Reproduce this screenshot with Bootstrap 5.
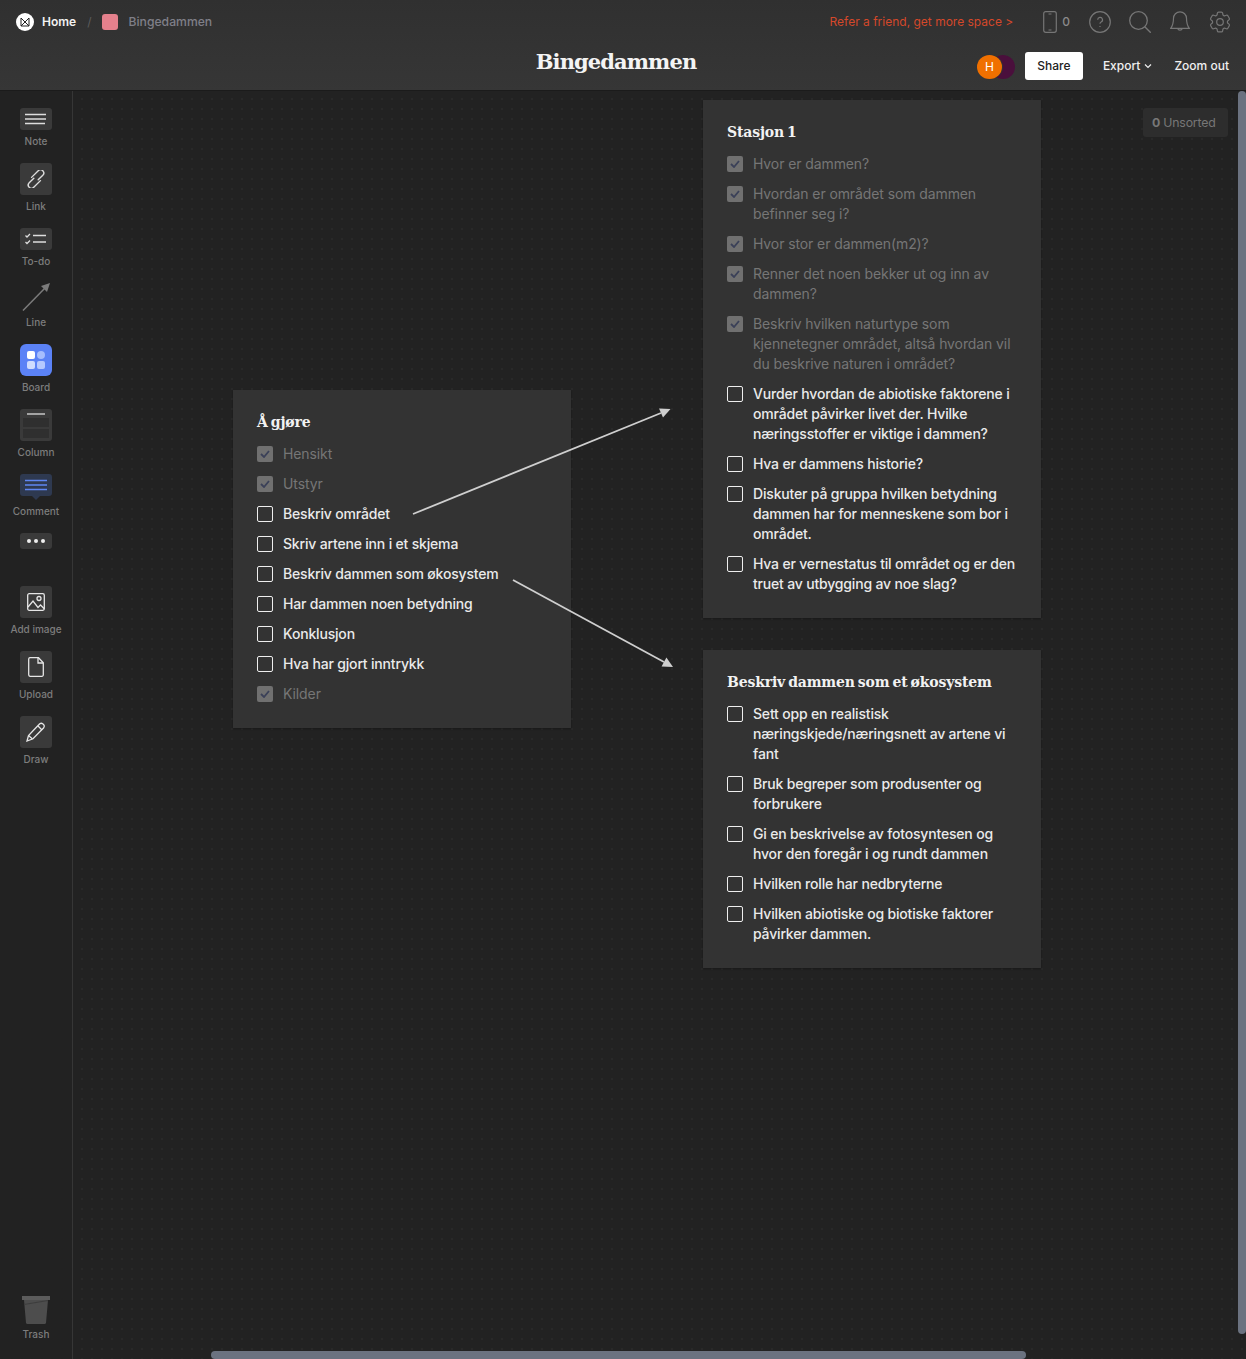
<!doctype html>
<html lang="no">
<head>
<meta charset="utf-8">
<title>Bingedammen</title>
<link href="https://cdn.jsdelivr.net/npm/bootstrap@5.3.0/dist/css/bootstrap.min.css" rel="stylesheet">
<style>
html,body{height:100%;overflow:hidden}
body{background:#222;font-family:Inter,"Noto Sans",sans-serif;color:#eee;width:1246px;height:1359px}
.app-head{height:91px;background:linear-gradient(#303030,#363636);border-bottom:1px solid #1b1b1b;position:relative;z-index:3}
.head-top{height:43px;padding:0 15px 0 16px}
.head-sub{height:46px;padding-right:17px}
.logo-dot{width:18px;height:18px;background:#fff;border-radius:50%}
.crumb-home{font-size:12px;font-weight:600;color:#f2f2f2;margin-left:8px}
.crumb-sep{font-size:12px;color:#5c5c5c;margin:0 11px}
.crumb-sq{width:16px;height:16px;background:#e4808c;border-radius:3px}
.crumb-board{font-size:12.2px;line-height:18px;font-weight:500;color:#7f7f88;margin-left:10px}
.refer{font-size:12px;color:#d5482a;margin-right:30px}
.dev-count{font-size:12px;font-weight:500;color:#8a8a8a;margin-left:5px;margin-right:19px}
.top-ico{display:block}
.ico-gap-a{margin-right:18px}
.ico-gap-b{margin-right:19px}
.board-title{position:absolute;left:0;right:14px;top:47px;text-align:center;font-family:"DejaVu Serif","Liberation Serif",serif;font-weight:700;font-size:21px;line-height:30px;color:#f4f4f4;letter-spacing:-.9px}
.av-wrap{width:38px;height:24px;position:relative;margin-top:2px}
.av-b{position:absolute;left:14px;top:0;width:24px;height:24px;border-radius:50%;background:#4a0f3c}
.av-a{position:absolute;left:0;top:0;width:25px;height:24px;border-radius:50%;background:#f07000;color:#fff;font-size:12px;line-height:24px;text-align:center;box-shadow:1px 0 0 #333}
.share-btn{--bs-btn-padding-x:0;--bs-btn-padding-y:0;--bs-btn-font-size:12px;--bs-btn-border-radius:3px;width:58px;height:28px;margin-left:10px;background:#fff;color:#222;border:0;line-height:28px;font-weight:500}
.head-link{font-size:12px;font-weight:500;color:#f0f0f0}
.export-link{margin:0 22px 0 20px}
.tool-rail{width:73px;flex:none;border-right:1px solid #363636;background:#222;padding-top:17px;position:relative;z-index:2}
.tool-item{width:72px;margin-bottom:15px}
.tool-box{width:32px;border-radius:3px;background:#3a3a3a}
.tool-label{font-size:10px;line-height:14px;margin-top:4px;color:#7d7d7d;font-weight:500}
.h22{height:22px}.h32{height:32px}.h16{height:16px}
.tool-gap{margin-bottom:37px}
.trash-item{position:absolute;left:0;top:1205px}
.trash-item .tool-label{margin-top:3px}
.canvas-area{flex:1;position:relative;background-color:#222;background-image:radial-gradient(circle at 1px 1px,#292929 .8px,transparent .9px);background-size:10px 10px;background-position:8px 7px}
.task-card{position:absolute;width:338px;background:#333;padding:21px 24px 24px;box-shadow:0 1px 2px rgba(0,0,0,.3)}
.task-title{font-family:"DejaVu Serif","Liberation Serif",serif;font-weight:700;font-size:14px;line-height:22px;color:#f2f2f2;letter-spacing:-.15px;word-spacing:-1.7px;margin-bottom:11px}
.task-list{display:flex;flex-direction:column;gap:10px;margin:0;padding:0;list-style:none}
.task-row{display:flex;gap:10px;font-size:14px;line-height:20px;color:#eaeaea;letter-spacing:-.18px;font-weight:500}
.task-done{color:#767676;font-weight:400;letter-spacing:-.1px}
.tick{width:16px;height:16px;flex:none;margin-top:2px;border:1.5px solid #eee;border-radius:2px}
.task-done .tick{background:#707070;border:0;display:flex;align-items:center;justify-content:center}
.unsorted{position:absolute;left:1070px;top:17px;width:85px;height:29px;padding-left:9px;background:#2d2d2d;border-radius:3px;font-size:12.3px;line-height:29px;color:#777;letter-spacing:-.2px}
.unsorted b{font-weight:700}
.arrows{position:absolute;left:0;top:0;pointer-events:none}
.scroll-v{position:absolute;left:1238px;top:91px;width:8px;height:1243px;background:#6b7280;border-radius:4px;z-index:4}
.scroll-h{position:absolute;left:211px;top:1351px;width:815px;height:8px;background:#6b7280;border-radius:4px;z-index:4}
.canvas-row{height:1268px}
.board-ico{background:#5b82f6;border-radius:6px}
.card-todo{left:160px;top:299px}
.card-st1{left:630px;top:9px}
.card-eco{left:630px;top:559px}
</style>
</head>
<body class="position-relative">
<header class="app-head">
  <div class="head-top d-flex align-items-center">
    <span class="logo-dot d-flex align-items-center justify-content-center">
      <svg width="10" height="10" viewBox="0 0 10 10" fill="none" stroke="#222" stroke-width="1"><path d="M1 1l4 4 4-4v8H1z"/><path d="M1 9l4-4 4 4"/></svg>
    </span>
    <span class="crumb-home">Home</span>
    <span class="crumb-sep">/</span>
    <span class="crumb-sq"></span>
    <span class="crumb-board">Bingedammen</span>
    <span class="refer ms-auto">Refer a friend, get more space &gt;</span>
    <svg class="top-ico" width="14" height="22" viewBox="0 0 14 22" fill="none" stroke="#767676" stroke-width="1.200"><rect x=".7" y=".7" width="12.600" height="20.600" rx="2"/><path d="M5.500 3h3M5.500 19h3"/></svg>
    <span class="dev-count">0</span>
    <svg class="top-ico ico-gap-a" width="22" height="22" viewBox="0 0 22 22" fill="none" stroke="#767676" stroke-width="1.200"><circle cx="11" cy="11" r="10.300"/><path d="M8.700 8.800a2.400 2.400 0 1 1 3.400 2.200c-.8.400-1.100 1-1.100 1.700"/><path d="M11 15v.9"/></svg>
    <svg class="top-ico ico-gap-b" width="22" height="22" viewBox="0 0 22 22" fill="none" stroke="#767676" stroke-width="1.300"><circle cx="9.500" cy="9.500" r="8.800"/><path d="M15.800 15.800l6 6"/></svg>
    <svg class="top-ico ico-gap-b" width="20" height="22" viewBox="0 0 20 22" fill="none" stroke="#767676" stroke-width="1.200"><path d="M10 .8a6.500 6.500 0 0 0-6.500 6.500c0 5-1 7.700-2.800 10h18.600c-1.800-2.300-2.800-5-2.800-10A6.500 6.500 0 0 0 10 .8z"/><path d="M7.700 17.500a2.400 2.400 0 0 0 4.600 0"/></svg>
    <svg class="top-ico" width="22" height="22" viewBox="2 2 20 20" fill="none" stroke="#767676" stroke-width="1.100"><path d="M9.594 3.940c.09-.542.56-.94 1.110-.94h2.593c.55 0 1.020.398 1.110.94l.213 1.281c.063.374.313.686.645.870.074.040.147.083.220.127.325.196.720.257 1.075.124l1.217-.456a1.125 1.125 0 011.370.490l1.296 2.247a1.125 1.125 0 01-.260 1.431l-1.003.827c-.293.240-.438.613-.431.992a6.759 6.759 0 010 .255c-.007.378.138.750.430.990l1.005.828c.424.350.534.954.260 1.430l-1.298 2.247a1.125 1.125 0 01-1.369.491l-1.217-.456c-.355-.133-.750-.072-1.076.124a6.570 6.570 0 01-.220.128c-.331.183-.581.495-.644.869l-.213 1.280c-.09.543-.56.941-1.110.941h-2.594c-.55 0-1.020-.398-1.110-.94l-.213-1.281c-.062-.374-.312-.686-.644-.870a6.520 6.520 0 01-.220-.127c-.325-.196-.720-.257-1.076-.124l-1.217.456a1.125 1.125 0 01-1.369-.490l-1.297-2.247a1.125 1.125 0 01.260-1.431l1.004-.827c.292-.240.437-.613.430-.992a6.932 6.932 0 010-.255c.007-.378-.138-.750-.430-.990l-1.004-.828a1.125 1.125 0 01-.260-1.430l1.297-2.247a1.125 1.125 0 011.370-.491l1.216.456c.356.133.751.072 1.076-.124.072-.044.146-.087.220-.128.332-.183.582-.495.644-.869l.214-1.281z"/><circle cx="12" cy="12" r="3"/></svg>
  </div>
  <div class="board-title">Bingedammen</div>
  <div class="head-sub d-flex align-items-center justify-content-end">
    <div class="av-wrap"><span class="av-b"></span><span class="av-a">H</span></div>
    <button type="button" class="btn share-btn">Share</button>
    <span class="head-link export-link d-inline-flex align-items-center gap-1">Export
      <svg width="8" height="6" viewBox="0 0 8 6" fill="none" stroke="#eee" stroke-width="1.200"><path d="M1 1.500l3 3 3-3"/></svg>
    </span>
    <span class="head-link">Zoom out</span>
  </div>
</header>
<div class="d-flex canvas-row">
  <aside class="tool-rail">
    <div class="tool-item d-flex flex-column align-items-center">
      <div class="tool-box h22 d-flex align-items-center justify-content-center"><svg width="22" height="12" viewBox="0 0 22 12" stroke="#ddd" stroke-width="1.300"><path d="M0 1.500h21M0 6h21M0 10.500h20"/></svg></div>
      <div class="tool-label">Note</div>
    </div>
    <div class="tool-item d-flex flex-column align-items-center">
      <div class="tool-box h32 d-flex align-items-center justify-content-center"><svg width="18" height="18" viewBox="0 0 18 18" fill="none" stroke="#ddd" stroke-width="1.400" stroke-linecap="round"><g transform="rotate(45 9 9)"><path d="M4.700 11V1.500a3.200 3.200 0 0 1 6.400 0V8"/><path d="M13.300 7v9.500a3.200 3.200 0 0 1-6.400 0V10"/></g></svg></div>
      <div class="tool-label">Link</div>
    </div>
    <div class="tool-item d-flex flex-column align-items-center">
      <div class="tool-box h22 d-flex align-items-center justify-content-center"><svg width="22" height="12" viewBox="0 0 22 12" fill="none" stroke="#ddd" stroke-width="1.300"><path d="M0.500 2.500l1.500 1.500 3-3M0.500 9l1.500 1.500 3-3"/><path d="M8 2.500h13M8 9h13"/></svg></div>
      <div class="tool-label">To-do</div>
    </div>
    <div class="tool-item d-flex flex-column align-items-center">
      <svg width="32" height="28" viewBox="0 0 32 28"><path d="M3 27.500L26 4" stroke="#7b7b7b" stroke-width="1.500" fill="none"/><path d="M30 0l-3 9-6-6z" fill="#7b7b7b"/></svg>
      <div class="tool-label">Line</div>
    </div>
    <div class="tool-item d-flex flex-column align-items-center">
      <div class="tool-box board-ico h32 d-flex align-items-center justify-content-center"><svg width="20" height="20" viewBox="0 0 20 20"><rect x="1" y="1" width="8" height="8" rx="2" fill="#fff"/><circle cx="15" cy="5" r="4" fill="#a6bdfd"/><rect x="1" y="11" width="8" height="8" rx="2" fill="#cfdcfe"/><rect x="11" y="11" width="8" height="8" rx="2" fill="#b5c8fe"/></svg></div>
      <div class="tool-label">Board</div>
    </div>
    <div class="tool-item d-flex flex-column align-items-center">
      <div class="tool-box h32 column-ico"><svg width="32" height="32" viewBox="0 0 32 32"><path d="M7 5h18" stroke="#ddd" stroke-width="1.300"/><rect x="3" y="9" width="26" height="9" fill="#2f2f2f"/><rect x="3" y="20" width="26" height="9" fill="#2f2f2f"/></svg></div>
      <div class="tool-label">Column</div>
    </div>
    <div class="tool-item d-flex flex-column align-items-center">
      <svg width="32" height="26" viewBox="0 0 32 26"><path d="M3 0h26a3 3 0 0 1 3 3v16a3 3 0 0 1-3 3h-9l-4 4-4-4H3a3 3 0 0 1-3-3V3a3 3 0 0 1 3-3z" fill="#2e3950"/><path d="M5 6.500h22M5 11h22M5 15.500h22" stroke="#5f86f2" stroke-width="1.300"/></svg>
      <div class="tool-label">Comment</div>
    </div>
    <div class="tool-item tool-gap d-flex flex-column align-items-center">
      <div class="tool-box h16 d-flex align-items-center justify-content-center gap-1"><svg width="18" height="4" viewBox="0 0 18 4" fill="#eee"><circle cx="2" cy="2" r="2"/><circle cx="9" cy="2" r="2"/><circle cx="16" cy="2" r="2"/></svg></div>
    </div>
    <div class="tool-item d-flex flex-column align-items-center">
      <div class="tool-box h32 d-flex align-items-center justify-content-center"><svg width="18" height="18" viewBox="0 0 18 18" fill="none" stroke="#e6e6e6" stroke-width="1.300"><rect x=".7" y=".7" width="16.600" height="16.600" rx="1.500"/><circle cx="12" cy="5.500" r="2"/><path d="M1 14l5-6 5 6.500 2.500-2.500 4 4"/></svg></div>
      <div class="tool-label">Add image</div>
    </div>
    <div class="tool-item d-flex flex-column align-items-center">
      <div class="tool-box h32 d-flex align-items-center justify-content-center"><svg width="16" height="20" viewBox="0 0 16 20" fill="none" stroke="#e6e6e6" stroke-width="1.300"><path d="M2 .7h8.500l4.800 5v12a1.500 1.500 0 0 1-1.500 1.600H2A1.500 1.500 0 0 1 .7 17.800V2A1.500 1.500 0 0 1 2 .7z"/><path d="M10 1v5h5"/></svg></div>
      <div class="tool-label">Upload</div>
    </div>
    <div class="tool-item d-flex flex-column align-items-center">
      <div class="tool-box h32 d-flex align-items-center justify-content-center"><svg width="20" height="20" viewBox="0 0 20 20" fill="none" stroke="#e6e6e6" stroke-width="1.300"><path d="M1 19l1.500-5.500L13 2.500a2.500 2.500 0 0 1 4.500 3.500L7 16.800z"/><path d="M12 4l4 4M2.500 13.500l4 3.500"/></svg></div>
      <div class="tool-label">Draw</div>
    </div>
    <div class="tool-item trash-item d-flex flex-column align-items-center">
      <svg width="28" height="28" viewBox="0 0 28 28"><rect x="0" y="0" width="28" height="4" fill="#5c5c5c"/><path d="M2 4h24l-2 23a2 2 0 0 1-2 1H6a2 2 0 0 1-2-1z" fill="#4d4d4d"/><path d="M2 8l24-4v1L2 9z" fill="#3c3c3c"/></svg>
      <div class="tool-label">Trash</div>
    </div>
  </aside>
  <main class="canvas-area">
    <section class="task-card card-todo">
      <div class="task-title">Å gjøre</div>
      <ul class="task-list">
        <li class="task-row task-done"><span class="tick"><svg width="10" height="8" viewBox="0 0 10 8" fill="none" stroke="#3a4058" stroke-width="1.800"><path d="M1 4l3 3 5-6"/></svg></span>Hensikt</li>
        <li class="task-row task-done"><span class="tick"><svg width="10" height="8" viewBox="0 0 10 8" fill="none" stroke="#3a4058" stroke-width="1.800"><path d="M1 4l3 3 5-6"/></svg></span>Utstyr</li>
        <li class="task-row"><span class="tick"></span>Beskriv området</li>
        <li class="task-row"><span class="tick"></span>Skriv artene inn i et skjema</li>
        <li class="task-row"><span class="tick"></span>Beskriv dammen som økosystem</li>
        <li class="task-row"><span class="tick"></span>Har dammen noen betydning</li>
        <li class="task-row"><span class="tick"></span>Konklusjon</li>
        <li class="task-row"><span class="tick"></span>Hva har gjort inntrykk</li>
        <li class="task-row task-done"><span class="tick"><svg width="10" height="8" viewBox="0 0 10 8" fill="none" stroke="#3a4058" stroke-width="1.800"><path d="M1 4l3 3 5-6"/></svg></span>Kilder</li>
      </ul>
    </section>
    <section class="task-card card-st1">
      <div class="task-title">Stasjon 1</div>
      <ul class="task-list">
        <li class="task-row task-done"><span class="tick"><svg width="10" height="8" viewBox="0 0 10 8" fill="none" stroke="#3a4058" stroke-width="1.800"><path d="M1 4l3 3 5-6"/></svg></span><span>Hvor er dammen?</span></li>
        <li class="task-row task-done"><span class="tick"><svg width="10" height="8" viewBox="0 0 10 8" fill="none" stroke="#3a4058" stroke-width="1.800"><path d="M1 4l3 3 5-6"/></svg></span><span>Hvordan er området som dammen befinner seg i?</span></li>
        <li class="task-row task-done"><span class="tick"><svg width="10" height="8" viewBox="0 0 10 8" fill="none" stroke="#3a4058" stroke-width="1.800"><path d="M1 4l3 3 5-6"/></svg></span><span>Hvor stor er dammen(m2)?</span></li>
        <li class="task-row task-done"><span class="tick"><svg width="10" height="8" viewBox="0 0 10 8" fill="none" stroke="#3a4058" stroke-width="1.800"><path d="M1 4l3 3 5-6"/></svg></span><span>Renner det noen bekker ut og inn av dammen?</span></li>
        <li class="task-row task-done"><span class="tick"><svg width="10" height="8" viewBox="0 0 10 8" fill="none" stroke="#3a4058" stroke-width="1.800"><path d="M1 4l3 3 5-6"/></svg></span><span>Beskriv hvilken naturtype som kjennetegner området, altså hvordan vil du beskrive naturen i området?</span></li>
        <li class="task-row"><span class="tick"></span><span>Vurder hvordan de abiotiske faktorene i området påvirker livet der. Hvilke næringsstoffer er viktige i dammen?</span></li>
        <li class="task-row"><span class="tick"></span><span>Hva er dammens historie?</span></li>
        <li class="task-row"><span class="tick"></span><span>Diskuter på gruppa hvilken betydning dammen har for menneskene som bor i området.</span></li>
        <li class="task-row"><span class="tick"></span><span>Hva er vernestatus til området og er den truet av utbygging av noe slag?</span></li>
      </ul>
    </section>
    <section class="task-card card-eco">
      <div class="task-title">Beskriv dammen som et økosystem</div>
      <ul class="task-list">
        <li class="task-row"><span class="tick"></span><span>Sett opp en realistisk næringskjede/næringsnett av artene vi fant</span></li>
        <li class="task-row"><span class="tick"></span><span>Bruk begreper som produsenter og forbrukere</span></li>
        <li class="task-row"><span class="tick"></span><span>Gi en beskrivelse av fotosyntesen og hvor den foregår i og rundt dammen</span></li>
        <li class="task-row"><span class="tick"></span><span>Hvilken rolle har nedbryterne</span></li>
        <li class="task-row"><span class="tick"></span><span>Hvilken abiotiske og biotiske faktorer påvirker dammen.</span></li>
      </ul>
    </section>
    <svg class="arrows" width="1173" height="1268" viewBox="73 91 1173 1268" fill="none">
      <path d="M413 514L661 413" stroke="#cfcfcf" stroke-width="1.800"/>
      <path d="M670.500 409L659 408.500L663 417.500z" fill="#cfcfcf"/>
      <path d="M513 580L664 662" stroke="#cfcfcf" stroke-width="1.800"/>
      <path d="M673 667L661.600 666.400L666.400 657.600z" fill="#cfcfcf"/>
    </svg>
    <div class="unsorted"><b>0</b> Unsorted</div>
  </main>
</div>
<div class="scroll-v"></div>
<div class="scroll-h"></div>
</body>
</html>
